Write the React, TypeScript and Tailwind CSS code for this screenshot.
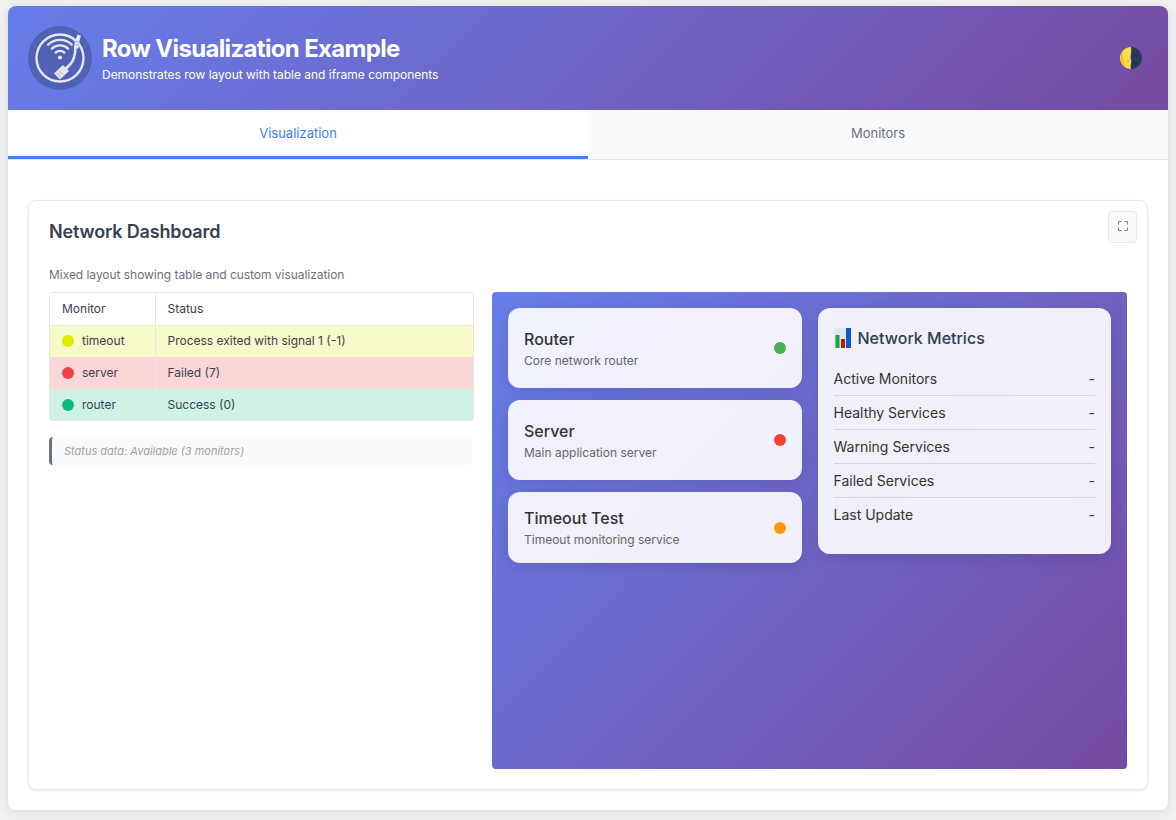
function Logo() {
  return (
    <svg width="64" height="64" viewBox="0 0 64 64" fill="none" className="shrink-0">
      <circle cx="32" cy="32" r="32" fill="#4f62b5" />
      <circle cx="32" cy="32" r="23.5" stroke="#e6e6ee" strokeWidth="2.4" />
      <circle cx="32" cy="31.5" r="2.1" fill="#e6e6ee" />
      <path d="M27.700 26.600a6.200 6.200 0 0 1 8.600 0" stroke="#e6e6ee" strokeWidth="2.300" strokeLinecap="round" />
      <path d="M23.800 22.600a11.800 11.800 0 0 1 16.400 0" stroke="#e6e6ee" strokeWidth="2.300" strokeLinecap="round" />
      <path d="M20 18.700a17.200 17.200 0 0 1 24 0" stroke="#e6e6ee" strokeWidth="2.300" strokeLinecap="round" />
      <path d="M47.500 20c0 8-1.500 14.500-5.500 18.500l-5 5" stroke="#4f62b5" strokeWidth="6" strokeLinecap="round" />
      <path d="M47.500 20c0 8-1.500 14.500-5.500 18.500l-5 5" stroke="#e6e6ee" strokeWidth="2.600" strokeLinecap="round" />
      <path d="M49.500 8.500l3.500 1-1.800 6.500-.7 6.500h-4.500l.8-7z" fill="#e6e6ee" />
      <path d="M47 15.500l4.500 1M47 18.500l4 .5" stroke="#9aa3cf" strokeWidth="0.7" />
      <path d="M35 39l6 6-9 8.500-6-6z" fill="#e6e6ee" />
      <path d="M29 47l3.500 3.500M31 45l3.500 3.500" stroke="#9aa3cf" strokeWidth="0.8" />
    </svg>
  );
}

function Moon() {
  return (
    <svg width="22" height="22" viewBox="0 0 22 22" className="shrink-0">
      <circle cx="11" cy="11" r="11" fill="#2b3a5c" />
      <circle cx="16" cy="8" r="2" fill="#223050" />
      <circle cx="15" cy="16" r="2.500" fill="#223050" />
      <path d="M11 0a11 11 0 0 0 0 22c-.8-2.500-.3-4.500.2-6.500S10.300 12 10.600 10 11.400 3 11 0z" fill="#fbdc4a" />
      <path d="M4 2.600a11 11 0 0 0 2 17.200C2.500 15 2 8 4 2.600z" fill="#eeba30" />
      <circle cx="8" cy="14" r="1.500" fill="#e6bb32" opacity="0.7" />
    </svg>
  );
}

function ChartEmoji() {
  return (
    <svg width="18" height="20" viewBox="0 0 18 20" className="shrink-0">
      <rect width="17.500" height="20" fill="#dfe7ec" />
      <rect x="1.500" y="7" width="4" height="13" fill="#12a83a" />
      <rect x="7" y="11" width="4" height="9" fill="#cc1111" />
      <rect x="12" y="0" width="5" height="20" fill="#0a5cc4" />
    </svg>
  );
}

const monitors = [
  { name: "timeout", status: "Process exited with signal 1 (-1)", row: "h-8 bg-[#f8fbc9]", dot: "bg-[#dfe800]" },
  { name: "server", status: "Failed (7)", row: "h-8 bg-[#fbd6d6]", dot: "bg-[#ef4444]" },
  { name: "router", status: "Success (0)", row: "h-[31px] bg-[#d0f2e5]", dot: "bg-[#10b981]" },
];

const services = [
  { name: "Router", desc: "Core network router", dot: "bg-[#4caf50]", height: "h-20" },
  { name: "Server", desc: "Main application server", dot: "bg-[#f44336]", height: "h-20" },
  { name: "Timeout Test", desc: "Timeout monitoring service", dot: "bg-[#ff9800]", height: "h-[71px]" },
];

const metrics = ["Active Monitors", "Healthy Services", "Warning Services", "Failed Services", "Last Update"];

export default function App() {
  return (
    <div className="h-[820px] overflow-hidden bg-[#f0f0f0] px-2 pt-1.5 font-['Inter',sans-serif]">
      <div className="h-[804px] overflow-hidden rounded-lg bg-white shadow-[0_2px_10px_rgba(0,0,0,0.1)]">
        <header className="flex h-[104px] items-center justify-between bg-linear-[135deg] from-[#667eea] to-[#764ba2] pr-[26px] pl-5">
          <div className="flex items-center gap-2.5">
            <Logo />
            <div>
              <h1 className="text-2xl leading-[29px] font-bold tracking-[-0.66px] text-white">Row Visualization Example</h1>
              <p className="mt-1 text-xs leading-[15px] tracking-[-0.02px] text-white">
                Demonstrates row layout with table and iframe components
              </p>
            </div>
          </div>
          <Moon />
        </header>

        <nav className="flex h-[50px] border-b border-[#e5e7eb] text-[13px]">
          <div className="flex h-[49px] flex-1 items-center justify-center border-b-[3px] border-[#3b82f6] bg-white pt-0.5 text-[#3b82f6]">
            Visualization
          </div>
          <div className="flex h-[49px] flex-1 items-center justify-center bg-[#f9fafb] pb-0.5 text-[#6b7280]">Monitors</div>
        </nav>

        <main className="px-5 pt-10">
          <section className="relative h-[590px] rounded-lg border border-[#e5e7eb] bg-white px-5 shadow-[0_1px_3px_rgba(0,0,0,0.1)]">
            <button className="absolute top-2.5 right-2.5 flex h-8 w-[29px] items-center justify-center rounded border border-[#e5e7eb] bg-[#f9fafb] pb-0.5">
              <svg width="10" height="10" viewBox="0 0 10 10" fill="none" stroke="#7b8494" strokeWidth="1">
                <path d="M.5 3.500V.5H3.500M6.500 .5h3V3.500M9.500 6.500v3H6.500M3.500 9.500H.5V6.500" />
              </svg>
            </button>
            <h2 className="pt-5 text-lg leading-[22px] font-semibold tracking-[-0.16px] text-[#374151]">Network Dashboard</h2>
            <p className="mt-6 text-xs leading-[15px] tracking-[-0.04px] text-[#6b7280]">
              Mixed layout showing table and custom visualization
            </p>

            <div className="mt-[10px] flex gap-[18px]">
              <div className="w-[425px]">
                <div className="overflow-hidden rounded border border-[#e5e7eb]">
                  <table className="w-full border-collapse text-xs text-[#374151]">
                    <thead>
                      <tr className="h-8 border-b border-[#e5e7eb] bg-white">
                        <th className="w-[105px] border-r border-[#e5e7eb] pl-3 text-left font-normal">Monitor</th>
                        <th className="pl-3 text-left font-normal">Status</th>
                      </tr>
                    </thead>
                    <tbody>
                      {monitors.map((m) => (
                        <tr key={m.name} className={m.row}>
                          <td className="border-r border-[#e5e7eb] pl-3">
                            <span className="flex items-center gap-2">
                              <span className={`size-3 rounded-full ${m.dot}`} />
                              {m.name}
                            </span>
                          </td>
                          <td className="pl-3">{m.status}</td>
                        </tr>
                      ))}
                    </tbody>
                  </table>
                </div>
                <div className="mt-4 flex h-7 w-[423px] items-center rounded border-l-[3px] border-[#6b7280] bg-[#f9fafb] pl-3 text-[11px] text-[#9ca3af] italic">
                  Status data: Available (3 monitors)
                </div>
              </div>

              <div className="grid h-[477px] w-[635px] grid-cols-2 items-start gap-4 rounded bg-linear-[135deg] from-[#667eea] to-[#764ba2] p-4">
                <div className="flex flex-col gap-3">
                  {services.map((s) => (
                    <div
                      key={s.name}
                      className={`flex items-center justify-between rounded-xl bg-white/90 px-4 shadow-[0_4px_15px_rgba(0,0,0,0.1)] ${s.height}`}
                    >
                      <div>
                        <div className="text-base leading-[20px] font-medium text-[#333333]">{s.name}</div>
                        <div className="mt-1 text-xs leading-[15px] text-[#666666]">{s.desc}</div>
                      </div>
                      <span className={`size-3 rounded-full ${s.dot}`} />
                    </div>
                  ))}
                </div>

                <div className="h-[246px] rounded-xl bg-white/90 px-4 pt-5 shadow-[0_4px_15px_rgba(0,0,0,0.1)]">
                  <div className="flex h-5 items-center gap-1.5 text-base font-medium text-[#2c3e50]">
                    <ChartEmoji />
                    Network Metrics
                  </div>
                  <div className="mt-[14px]">
                    {metrics.map((m, i) => (
                      <div
                        key={m}
                        className={`flex h-[34px] items-center justify-between text-sm text-[#333333] ${
                          i < metrics.length - 1 ? "border-b border-[#d6d6df]" : ""
                        }`}
                      >
                        <span>{m}</span>
                        <span>-</span>
                      </div>
                    ))}
                  </div>
                </div>
              </div>
            </div>
          </section>
        </main>
      </div>
    </div>
  );
}
